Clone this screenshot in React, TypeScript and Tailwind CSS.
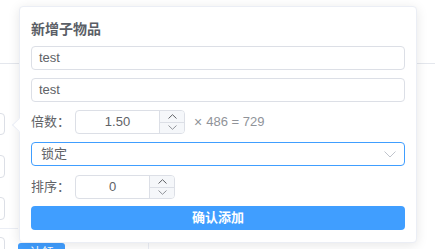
import React from "react";

const font = { fontFamily: '"Liberation Sans", Arial, "Noto Sans CJK SC", sans-serif' };

function Stepper({ value, width }: { value: string; width: string }) {
  return (
    <div className={`flex h-[24px] ${width} rounded-[4px] border border-[#dcdfe6] bg-white overflow-hidden`}>
      <div className="flex-1 flex items-center justify-center text-[13px] text-[#606266]">{value}</div>
      <div className="w-[25px] flex flex-col border-l border-[#dcdfe6] bg-[#f5f7fa]">
        <div className="flex-1 flex items-center justify-center border-b border-[#dcdfe6]">
          <svg width="9" height="5" viewBox="0 0 9 5" fill="none">
            <path d="M0.5 4.5 L4.5 0.7 L8.5 4.5" stroke="#606266" strokeWidth="1" />
          </svg>
        </div>
        <div className="flex-1 flex items-center justify-center">
          <svg width="9" height="5" viewBox="0 0 9 5" fill="none">
            <path d="M0.5 0.5 L4.5 4.3 L8.5 0.5" stroke="#909399" strokeWidth="1" />
          </svg>
        </div>
      </div>
    </div>
  );
}

function Field({ children, className = "" }: { children: React.ReactNode; className?: string }) {
  return (
    <div className={`h-[24px] rounded-[4px] border flex items-center text-[13px] text-[#606266] ${className}`}>
      {children}
    </div>
  );
}

export default function App() {
  return (
    <div className="relative w-[435px] h-[249px] bg-white overflow-hidden" style={font}>
      {/* background page, laid out by flow */}
      <div className="flex flex-col h-full">
        <div className="h-[64px] shrink-0 border-b border-[#e4e7ed]" />
        <div className="flex flex-1">
          <div className="w-[18px] shrink-0 flex flex-col pt-[49px]">
            <div className="ml-[-20px] w-[25px] h-[22px] rounded-[4px] border border-[#dcdfe6]" />
            <div className="ml-[-20px] mt-[20px] w-[25px] h-[23px] rounded-[4px] border border-[#dcdfe6]" />
            <div className="ml-[-20px] mt-[19px] w-[25px] h-[23px] rounded-[4px] border border-[#dcdfe6]" />
            <div className="mt-[8px] border-t border-[#ebeef5]" />
            <div className="ml-[-20px] mt-[8px] w-[25px] h-[23px] rounded-[4px] border border-[#dcdfe6]" />
          </div>
          <div className="w-[131px] shrink-0 border-r border-[#ebeef5] pt-[179px]">
            <div className="w-[47px] h-[20px] bg-[#409eff] rounded-[3px] text-white text-[12px] flex items-start justify-center pt-[1px]">
              认领
            </div>
          </div>
          <div className="flex-1" />
        </div>
      </div>

      {/* popover */}
      <div className="absolute left-[19px] top-[6px] w-[398px] h-[237px] bg-white rounded-[4px] border border-[#ebeef5] shadow-[0_2px_12px_0_rgba(0,0,0,0.1)] px-[11px] pt-[11px] flex flex-col">
        <div className="absolute left-[-6px] top-[113px] w-[10px] h-[10px] bg-white border-l border-b border-[#ebeef5] rotate-45" />
        <div className="h-[22px] flex items-center text-[14px] font-bold text-[#5a5e66]">新增子物品</div>
        <Field className="mt-[6px] border-[#dcdfe6] px-[7px]">test</Field>
        <Field className="mt-[8px] border-[#dcdfe6] px-[7px]">test</Field>
        <div className="mt-[8px] h-[24px] flex items-center">
          <div className="w-[44px] text-[13px] text-[#606266]">倍数：</div>
          <Stepper value="1.50" width="w-[110px]" />
          <div className="ml-[9px] text-[13px] text-[#909399] flex items-center">
            <span className="mr-[4px] text-[14px]">×</span>486 = 729
          </div>
        </div>
        <Field className="mt-[8px] border-[#409eff] justify-between pl-[9px] pr-[8px]">
          <span>锁定</span>
          <svg width="12" height="7" viewBox="0 0 12 7" fill="none">
            <path d="M0.5 0.5 L6 6 L11.5 0.5" stroke="#c0c4cc" strokeWidth="1" />
          </svg>
        </Field>
        <div className="mt-[9px] h-[24px] flex items-center">
          <div className="w-[44px] text-[13px] text-[#606266]">排序：</div>
          <Stepper value="0" width="w-[100px]" />
        </div>
        <div className="mt-[7px] h-[24px] rounded-[4px] bg-[#409eff] flex items-center justify-center text-[13px] font-bold text-white">
          确认添加
        </div>
      </div>
    </div>
  );
}
